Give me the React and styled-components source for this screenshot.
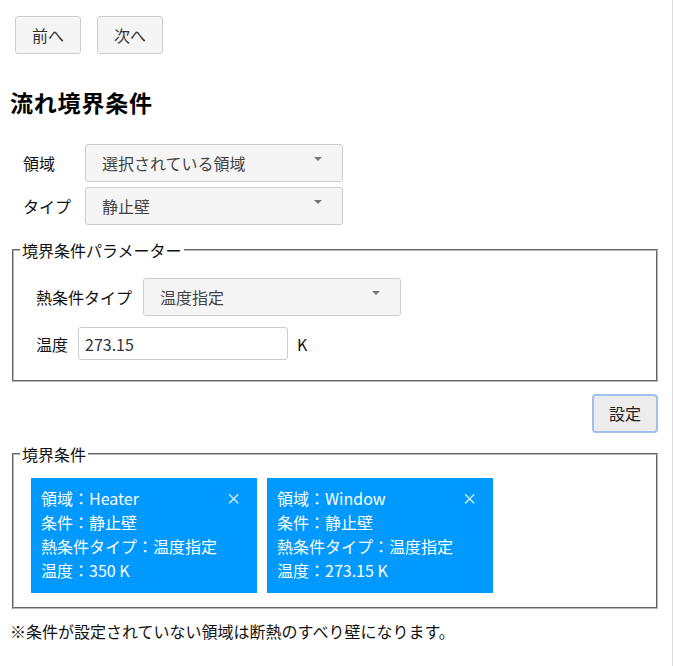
import React from "react";
import styled, { createGlobalStyle } from "styled-components";

const GlobalStyle = createGlobalStyle`
  html, body {
    margin: 0;
    padding: 0;
    background: #fff;
  }
  body {
    font-family: "Noto Sans CJK JP", "Noto Sans", sans-serif;
    font-size: 16px;
    color: #111;
  }
  * {
    box-sizing: border-box;
  }
`;

const Page = styled.div`
  width: 673px;
  min-height: 666px;
  padding: 16px 12px 0 10px;
  border-right: 1px solid #dcdcdc;
`;

const NavBar = styled.div`
  display: flex;
  gap: 16px;
  margin-left: 5px;
`;

const Button = styled.button`
  font-family: inherit;
  font-size: 16px;
  line-height: 20px;
  padding: 8px 16px;
  color: #333;
  background: #f5f5f5;
  border: 1px solid #cccccc;
  border-radius: 3px;
  cursor: pointer;
`;

const FocusButton = styled(Button)`
  padding: 8px 15px;
  line-height: 19px;
  background: #ececec;
  border: 2px solid #a3bff0;
  border-radius: 4px;
  color: #222;
`;

const Heading = styled.h2`
  margin: 33px 0 0 0;
  font-size: 23px;
  line-height: 30px;
  letter-spacing: 0.8px;
  font-weight: bold;
  color: #000;
`;

const FormGrid = styled.div`
  display: grid;
  grid-template-columns: auto 258px;
  column-gap: 14px;
  row-gap: 5px;
  align-items: center;
  margin: 27px 0 0 13px;
  width: max-content;
`;

const Label = styled.label`
  line-height: 20px;
  color: #111;
`;

const SelectWrap = styled.div`
  position: relative;
  width: ${(p) => p.width || "100%"};

  &::after {
    content: "";
    position: absolute;
    right: 21px;
    top: 13px;
    border-left: 4px solid transparent;
    border-right: 4px solid transparent;
    border-top: 4px solid #777;
    pointer-events: none;
  }
`;

const Select = styled.select`
  appearance: none;
  width: 100%;
  height: 38px;
  padding: 0 16px;
  font-family: inherit;
  font-size: 16px;
  color: #444;
  background: #f5f5f5;
  border: 1px solid #cccccc;
  border-radius: 3px;
`;

const Fieldset = styled.fieldset`
  margin: ${(p) => p.top || 0}px 2px 0 2px;
  padding: 0 6px ${(p) => p.bottom || 0}px 6px;
  border: 2px groove #b8b8b8;
`;

const Legend = styled.legend`
  padding: 0 2px;
  line-height: 20px;
  color: #111;
`;

const ParamRows = styled.div`
  display: flex;
  flex-direction: column;
  gap: 11px;
  padding: 18px 0 0 16px;
`;

const Row = styled.div`
  display: flex;
  align-items: center;
  gap: ${(p) => p.gap || 10}px;
`;

const TextInput = styled.input`
  width: 210px;
  height: 33px;
  padding: 0 6px;
  font-family: inherit;
  font-size: 16px;
  color: #333;
  background: #fff;
  border: 1px solid #cccccc;
  border-radius: 3px;
`;

const Unit = styled.span`
  margin-left: -1px;
  color: #111;
`;

const ActionBar = styled.div`
  display: flex;
  justify-content: flex-end;
  margin: 12px 2px 0 0;
`;

const CardList = styled.div`
  display: flex;
  gap: 10px;
  padding: 14px 0 0 11px;
`;

const Card = styled.div`
  width: 226px;
  padding: 8px 16px 11px 10px;
  background: #0099ff;
  color: #fff;
  line-height: 24px;
`;

const CardHead = styled.div`
  display: flex;
  justify-content: space-between;
  align-items: center;
`;

const CloseMark = styled.span`
  font-size: 15px;
  cursor: pointer;
`;

const Note = styled.p`
  margin: 10px 0 0 0;
  line-height: 24px;
  color: #111;
`;

const conditions = [
  { region: "Heater", type: "静止壁", heat: "温度指定", temp: "350 K" },
  { region: "Window", type: "静止壁", heat: "温度指定", temp: "273.15 K" },
];

function ConditionCard({ item }) {
  return (
    <Card>
      <CardHead>
        <span>領域：{item.region}</span>
        <CloseMark>×</CloseMark>
      </CardHead>
      <div>条件：{item.type}</div>
      <div>熱条件タイプ：{item.heat}</div>
      <div>温度：{item.temp}</div>
    </Card>
  );
}

export default function App() {
  return (
    <>
      <GlobalStyle />
      <Page>
        <NavBar>
          <Button>前へ</Button>
          <Button>次へ</Button>
        </NavBar>

        <Heading>流れ境界条件</Heading>

        <FormGrid>
          <Label>領域</Label>
          <SelectWrap>
            <Select defaultValue="selected">
              <option value="selected">選択されている領域</option>
            </Select>
          </SelectWrap>
          <Label>タイプ</Label>
          <SelectWrap>
            <Select defaultValue="wall">
              <option value="wall">静止壁</option>
            </Select>
          </SelectWrap>
        </FormGrid>

        <Fieldset top={15} bottom={20}>
          <Legend>境界条件パラメーター</Legend>
          <ParamRows>
            <Row gap={11}>
              <Label>熱条件タイプ</Label>
              <SelectWrap width="258px">
                <Select defaultValue="temp">
                  <option value="temp">温度指定</option>
                </Select>
              </SelectWrap>
            </Row>
            <Row gap={10}>
              <Label>温度</Label>
              <TextInput defaultValue="273.15" />
              <Unit>K</Unit>
            </Row>
          </ParamRows>
        </Fieldset>

        <ActionBar>
          <FocusButton>設定</FocusButton>
        </ActionBar>

        <Fieldset top={11} bottom={14}>
          <Legend>境界条件</Legend>
          <CardList>
            {conditions.map((c) => (
              <ConditionCard key={c.region} item={c} />
            ))}
          </CardList>
        </Fieldset>

        <Note>※条件が設定されていない領域は断熱のすべり壁になります。</Note>
      </Page>
    </>
  );
}
